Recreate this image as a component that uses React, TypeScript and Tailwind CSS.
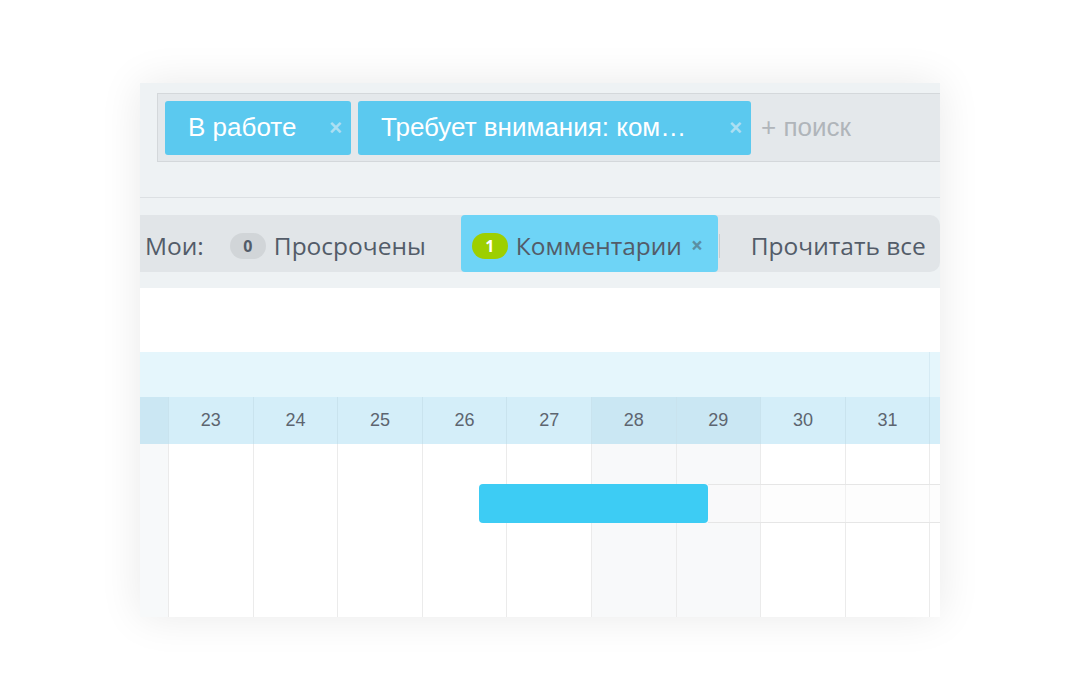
import React from "react";

const days = ["23", "24", "25", "26", "27", "28", "29", "30", "31"];
const weekend = new Set(["28", "29"]);

function Tag({ label, width }: { label: string; width: string }) {
  return (
    <div
      className={`flex h-[54px] shrink-0 items-center justify-between rounded-[3px] bg-[#5bc9ef] pl-[23px] pr-[9px] text-[26px] text-white ${width}`}
    >
      <span className="whitespace-nowrap">{label}</span>
      <span className="text-[22px] font-bold text-[#acdff2]">×</span>
    </div>
  );
}

export default function App() {
  return (
    <div className="h-[700px] w-full bg-white pl-[140px] pt-[83px] font-['Liberation_Sans',Arial,sans-serif]">
      <div className="h-[534px] w-[800px] overflow-hidden bg-white shadow-[0_0_40px_rgba(0,0,0,0.09)]">
        {/* filter */}
        <div className="h-[114px] bg-[#eef2f4] pl-[17px] pt-[10px]">
          <div className="flex h-[69px] w-[820px] items-center gap-[7px] border border-[#d4d8db] bg-[#e4e8eb] pl-[7px]">
            <Tag label="В работе" width="w-[186px]" />
            <Tag label="Требует внимания: ком…" width="w-[393px]" />
            <span className="ml-[3px] whitespace-nowrap text-[26px] text-[#b0b5ba]">
              + поиск
            </span>
          </div>
        </div>
        <div className="h-px bg-[#dce0e3]" />

        {/* counters */}
        <div className="h-[90px] bg-[#eef2f4] pt-[17px] font-['Open_Sans',sans-serif] text-[24.5px] text-[#535c69]">
          <div className="-ml-[10px] flex h-[57px] w-[810px] items-center rounded-r-[10px] bg-[#e1e5e8] pl-[15px] pt-[5px]">
            <span>Мои:</span>
            <span className="ml-[26px] flex h-[26px] w-[36px] items-center justify-center rounded-full bg-[#d1d5d8] text-[16px] font-bold text-[#535c69]">
              0
            </span>
            <span className="ml-[8px]">Просрочены</span>
            <div className="-mt-[5px] ml-[35px] flex h-[57px] w-[257px] shrink-0 items-center rounded-[4px] bg-[#6ed4f6] pl-[11px] pt-[5px]">
              <span className="flex h-[26px] w-[36px] items-center justify-center rounded-full bg-[#9dcf00] text-[16px] font-bold text-white">
                1
              </span>
              <span className="ml-[8px]">Комментарии</span>
              <span className="ml-[9px] text-[21px] font-bold text-[#5b8fa3]">×</span>
            </div>
            <span className="ml-[1px] h-[24px] w-px bg-[#c9cdd0]" />
            <span className="ml-[31px] whitespace-nowrap">Прочитать все</span>
          </div>
        </div>

        <div className="h-[64px] bg-white" />

        {/* month band */}
        <div className="flex h-[45px] bg-[#e5f6fc]">
          <div className="w-[789px] shrink-0" />
          <div className="border-l border-[#d6ebf4]" />
        </div>

        {/* day header */}
        <div className="flex h-[47px] bg-[#d4eef9] text-[18px] text-[#5d6570]">
          <div className="w-[28px] shrink-0 bg-[#cbe7f3]" />
          {days.map((d) => (
            <div
              key={d}
              className={`flex w-[84.6px] shrink-0 items-center justify-center border-l border-[#c9e3ee] ${
                weekend.has(d) ? "bg-[#cae7f3]" : ""
              }`}
            >
              {d}
            </div>
          ))}
          <div className="flex-1 border-l border-[#c9e3ee]" />
        </div>

        {/* body */}
        <div className="relative flex h-[173px] bg-white">
          <div className="w-[28px] shrink-0 bg-[#f7f9fa]" />
          {days.map((d) => (
            <div
              key={d}
              className={`w-[84.6px] shrink-0 border-l border-[#ebebeb] ${
                weekend.has(d) ? "bg-[#f8f9fa]" : ""
              }`}
            />
          ))}
          <div className="flex-1 border-l border-[#ebebeb]" />

          <div className="absolute left-[568px] right-0 top-[40px] h-[39px] border-y border-[#e6e6e6] bg-[#fafafa]/40" />
          <div className="absolute left-[339px] top-[40px] h-[39px] w-[229px] rounded-[4px] bg-[#3dccf4]" />
        </div>
      </div>
    </div>
  );
}
